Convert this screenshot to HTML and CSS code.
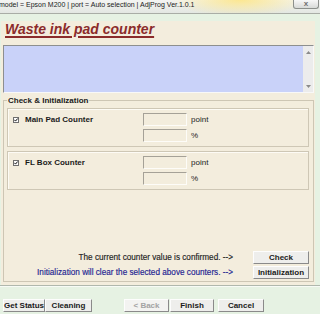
FILE: index.html
```html
<!DOCTYPE html>
<html>
<head>
<meta charset="utf-8">
<link rel="stylesheet" href="styles.css">
</head>
<body>
<div class="titlebar">
  <span class="title-text">model = Epson M200 | port = Auto selection | AdjProg Ver.1.0.1</span>
  <span class="close">x</span>
</div>
<div class="panel">
  <h1 class="heading">Waste ink pad counter</h1>
  <div class="memo">
    <div class="memo-area"></div>
    <div class="scrollbar">
      <svg width="5" height="3" viewBox="0 0 5 3"><path d="M0 3 L2.5 0 L5 3 Z" fill="#8a8a8a"/></svg>
      <svg width="5" height="3" viewBox="0 0 5 3"><path d="M0 0 L2.5 3 L5 0 Z" fill="#8a8a8a"/></svg>
    </div>
  </div>
  <fieldset class="group">
    <legend>Check &amp; Initialization</legend>
    <div class="frame">
      <div class="chk">
        <svg class="box" width="6" height="6" viewBox="0 0 6 6"><rect x="0.5" y="0.5" width="5" height="5" fill="#fff" stroke="#6f6f6f"/><path d="M1.4 2.8 L2.5 4.1 L4.7 1.5" stroke="#111" stroke-width="1" fill="none"/></svg>
        <span>Main Pad Counter</span>
      </div>
      <div class="fields">
        <div class="field"><span class="input"></span><span>point</span></div>
        <div class="field"><span class="input"></span><span>%</span></div>
      </div>
    </div>
    <div class="frame frame2">
      <div class="chk">
        <svg class="box" width="6" height="6" viewBox="0 0 6 6"><rect x="0.5" y="0.5" width="5" height="5" fill="#fff" stroke="#6f6f6f"/><path d="M1.4 2.8 L2.5 4.1 L4.7 1.5" stroke="#111" stroke-width="1" fill="none"/></svg>
        <span>FL Box Counter</span>
      </div>
      <div class="fields">
        <div class="field"><span class="input"></span><span>point</span></div>
        <div class="field"><span class="input"></span><span>%</span></div>
      </div>
    </div>
    <div class="actions">
      <div class="action-row"><span class="info">The current counter value is confirmed. --&gt;</span><button class="btn act">Check</button></div>
      <div class="action-row"><span class="info blue">Initialization will clear the selected above counters. --&gt;</span><button class="btn act">Initialization</button></div>
    </div>
  </fieldset>
</div>
<div class="footer">
  <button class="btn b-status">Get Status</button>
  <button class="btn b-clean">Cleaning</button>
  <button class="btn b-back" disabled>&lt; Back</button>
  <button class="btn b-finish">Finish</button>
  <button class="btn b-cancel">Cancel</button>
</div>
</body>
</html>
```
FILE: styles.css
```css
html, body {
  margin: 0;
  padding: 0;
}
body {
  width: 320px;
  height: 314px;
  overflow: hidden;
  background: #e6f2e3;
  font-family: "Liberation Sans", Arial, sans-serif;
  color: #1a1a1a;
}
.titlebar {
  height: 13px;
  border-bottom: 1px solid #a9ada6;
  display: flex;
  background:
    radial-gradient(ellipse 70px 16px at 240px 0, rgba(252, 230, 140, 0.95), rgba(252, 230, 140, 0)),
    linear-gradient(#f4f5f3, #e3e7e2);
}
.title-text {
  flex: 1;
  font-size: 7px;
  line-height: 9px;
  margin-left: -1px;
  white-space: nowrap;
  color: #222;
}
.close {
  width: 24px;
  height: 8px;
  margin-right: 1px;
  border: 1px solid #8c908c;
  border-top: 0;
  border-radius: 0 0 3px 3px;
  background: linear-gradient(#f7f7f7, #d8dad8);
  font-size: 8px;
  line-height: 7px;
  font-weight: bold;
  text-align: center;
  color: #707070;
}
.panel {
  margin-left: 1px;
  width: 314px;
  box-sizing: border-box;
  padding: 0 0 3px 2px;
  background: #f3eddd;
}
.heading {
  margin: 7px 0 0 2px;
  font: italic bold 14px/16px "Liberation Sans", Arial, sans-serif;
  color: #8b2b2b;
  text-decoration: underline;
  text-decoration-thickness: 1.5px;
  text-underline-offset: 2px;
}
.memo {
  margin-top: 8px;
  width: 311px;
  height: 48px;
  box-sizing: border-box;
  display: flex;
  border: 1px solid;
  border-color: #8d8f8f #f8f8f8 #f8f8f8 #8d8f8f;
}
.memo-area {
  flex: 1;
  background: #c9d2f9;
}
.scrollbar {
  width: 10px;
  background: #ececec;
  display: flex;
  flex-direction: column;
  justify-content: space-between;
  align-items: center;
  padding: 5px 0 4px;
  box-sizing: border-box;
}
.group {
  margin: 3px 0 0;
  padding: 0 4px 2px 3px;
  width: 311px;
  min-width: 0;
  box-sizing: border-box;
  border: 1px solid #cdc6b4;
}
.group legend {
  padding: 0 1px;
  font: bold 8px/9px "Liberation Sans", Arial, sans-serif;
  color: #1a1a1a;
}
.frame {
  margin-top: 3px;
  height: 39px;
  box-sizing: border-box;
  display: flex;
  align-items: flex-start;
  padding: 4px 0 0 5px;
  border: 1px solid #cec7b5;
  box-shadow: inset 1px 1px 0 #fdfbf5;
}
.frame2 {
  margin-top: 4px;
}
.chk {
  width: 130px;
  margin-top: 2px;
  display: flex;
  align-items: center;
  gap: 6px;
  font: bold 8px/9px "Liberation Sans", Arial, sans-serif;
  color: #1a1a1a;
}
.box {
  flex: none;
}
.fields {
  display: flex;
  flex-direction: column;
  gap: 3px;
}
.field {
  display: flex;
  align-items: center;
  gap: 4px;
  font-size: 8px;
  line-height: 13px;
  color: #222;
}
.input {
  width: 44px;
  height: 13px;
  box-sizing: border-box;
  border: 1px solid;
  border-color: #a5a197 #fdfcf8 #fdfcf8 #a5a197;
  background: #f3eddd;
}
.actions {
  margin-top: 61px;
  display: flex;
  flex-direction: column;
  align-items: flex-end;
  gap: 2px;
}
.action-row {
  display: flex;
  align-items: center;
  gap: 20px;
}
.info {
  font-size: 8.2px;
  line-height: 13px;
  color: #1e1e1e;
  white-space: nowrap;
  -webkit-text-stroke: 0.15px currentColor;
}
.info.blue {
  color: #1d2391;
}
.btn {
  height: 13px;
  padding: 0;
  box-sizing: border-box;
  border: 1px solid;
  border-color: #fdfdfd #8a8a8a #8a8a8a #fdfdfd;
  background: #eeeeec;
  font: bold 8px/11px "Liberation Sans", Arial, sans-serif;
  color: #1a1a1a;
  border-radius: 0;
}
.act {
  width: 56px;
}
.footer {
  border-top: 1px solid #b0b8ad;
  box-shadow: inset 0 1px 0 #f7fbf6;
  padding: 13px 0 0 3px;
  display: flex;
}
.b-status { width: 42px; }
.b-clean { width: 47px; }
.b-back { width: 45px; margin-left: 32px; color: #a3a3a3; background: #f3f3f1; }
.b-finish { width: 44px; margin-left: 1px; }
.b-cancel { width: 46px; margin-left: 4px; }
```
